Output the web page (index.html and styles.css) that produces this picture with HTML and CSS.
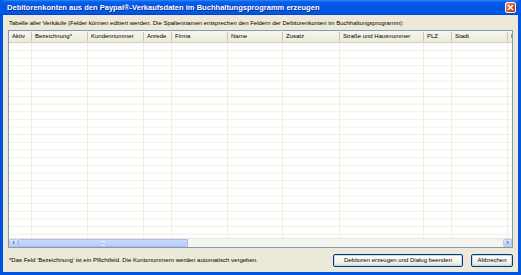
FILE: index.html
```html
<!DOCTYPE html>
<html lang="de">
<head>
  <meta charset="UTF-8">
  <title>Debitorenkonten erzeugen</title>
  <link rel="stylesheet" href="styles.css">
</head>
<body>
  <div class="window">
    <div class="titlebar">
      <span class="title">Debitorenkonten aus den Paypal®-Verkaufsdaten im Buchhaltungsprogramm erzeugen</span>
      <span class="close">
        <svg width="7" height="7" viewBox="0 0 7 7"><path d="M1 1 L6 6 M6 1 L1 6" stroke="#fff" stroke-width="1.4"/></svg>
      </span>
    </div>

    <div class="content">
      <p class="hint">Tabelle aller Verkäufe (Felder können editiert werden. Die Spaltennamen entsprechen den Feldern der Debitorenkonten im Buchhaltungsprogramm):</p>

      <div class="grid">
        <div class="head">
          <span>Aktiv</span>
          <span>Bezeichnung*</span>
          <span>Kundennummer</span>
          <span>Anrede</span>
          <span>Firma</span>
          <span>Name</span>
          <span>Zusatz</span>
          <span>Straße und Hausnummer</span>
          <span>PLZ</span>
          <span>Stadt</span>
          <span>L</span>
        </div>
        <div class="rows">
          <span></span><span></span><span></span><span></span><span></span><span></span>
          <span></span><span></span><span></span><span></span><span></span>
        </div>
        <div class="hscroll">
          <span class="arrow">&lsaquo;</span>
          <span class="thumb"><i></i></span>
          <span class="track"></span>
          <span class="arrow">&rsaquo;</span>
        </div>
      </div>

      <div class="footer">
        <span class="note">*Das Feld 'Bezeichnung' ist ein Pflichtfeld. Die Kontonummern werden automatisch vergeben.</span>
        <button class="btn btn-wide">Debitoren erzeugen und Dialog beenden</button>
        <button class="btn">Abbrechen</button>
      </div>
    </div>
  </div>
</body>
</html>
```

FILE: styles.css
```css
body {
  margin: 0;
  font-family: 'Liberation Sans', Arial, sans-serif;
  font-size: 6px;
  color: #000;
}

.window {
  width: 521px;
  height: 275px;
  display: flex;
  flex-direction: column;
  background: #0054e3;
  box-sizing: border-box;
  padding: 0 3px 3px 3px;
}

.titlebar {
  height: 17px;
  margin: 0 -3px;
  padding: 0 5px 0 7px;
  display: flex;
  align-items: center;
  justify-content: space-between;
  background: linear-gradient(#2b8cff 0%, #0a5fe8 12%, #0054e3 45%, #0058eb 85%, #0047c8 100%);
  border-radius: 5px 5px 0 0;
}

.title {
  color: #fff;
  font-weight: bold;
  font-size: 7.55px;
  text-shadow: 1px 1px 0 #0a2a80;
}

.close {
  width: 11px;
  height: 11px;
  box-sizing: border-box;
  border: 1px solid #fff;
  border-radius: 2px;
  background: linear-gradient(135deg, #f0936b, #dd4a1c 60%, #c23b10);
  display: flex;
  align-items: center;
  justify-content: center;
}

.content {
  flex: 1;
  background: #ece9d8;
  padding: 0 5px 0 5px;
  display: flex;
  flex-direction: column;
}

.hint {
  margin: 4px 0 0 1px;
  height: 11px;
  line-height: 8px;
}

.grid {
  height: 216px;
  border: 1px solid #7f9db9;
  background: #fff;
  display: flex;
  flex-direction: column;
  overflow: hidden;
}

.head,
.rows {
  display: grid;
  grid-template-columns: 23px 56px 56px 28px 56px 55px 57px 84px 28px 56px 60px;
}

.head {
  height: 11px;
  background: linear-gradient(#f7f6ef, #ebeadb);
  border-bottom: 1px solid #d6d2c2;
}

.head span {
  padding-left: 3px;
  line-height: 11px;
  white-space: nowrap;
  border-right: 1px solid #c7c5b2;
  border-image: linear-gradient(transparent 2px, #c7c5b2 2px, #c7c5b2 9px, transparent 9px) 1;
}

.rows {
  flex: 1;
  background-image: linear-gradient(transparent 6.67px, #f1efe2 6.67px);
  background-size: 100% 7.67px;
  background-position: 0 0.3px;
}

.rows span {
  border-right: 1px solid #f1efe2;
}

.hscroll {
  height: 8px;
  display: flex;
  background: #f5f4ee;
  border-top: 1px solid #e8e6dc;
}

.arrow {
  width: 9px;
  box-sizing: border-box;
  background: linear-gradient(#dbe6fd, #b8cdf7);
  border: 1px solid #b6c9ef;
  border-radius: 1px;
  color: #4d6185;
  font-size: 8px;
  font-weight: bold;
  line-height: 5px;
  text-align: center;
}

.thumb {
  width: 170px;
  box-sizing: border-box;
  background: linear-gradient(#cad9fc, #b9cdf9);
  border: 1px solid #a9bde9;
  border-radius: 1px;
  display: flex;
  align-items: center;
  justify-content: center;
}

.thumb i {
  width: 4px;
  height: 3px;
  border-top: 1px solid #eef3fe;
  border-bottom: 1px solid #eef3fe;
}

.track {
  flex: 1;
}

.footer {
  display: flex;
  align-items: center;
  height: 24px;
  padding-left: 1px;
}

.note {
  flex: 1;
}

.btn {
  font-family: 'Liberation Sans', Arial, sans-serif;
  font-size: 6px;
  height: 13px;
  padding: 0;
  border: 1px solid #003c74;
  border-radius: 2px;
  background: linear-gradient(#ffffff, #f3f2ec 70%, #d8d5c6);
  box-shadow: inset 0 0 0 1px #c6d6f4;
  color: #000;
}

.btn-wide {
  width: 130px;
  margin-right: 8px;
}

.btn + .btn:not(.btn-wide) {
  width: 42px;
}
```
